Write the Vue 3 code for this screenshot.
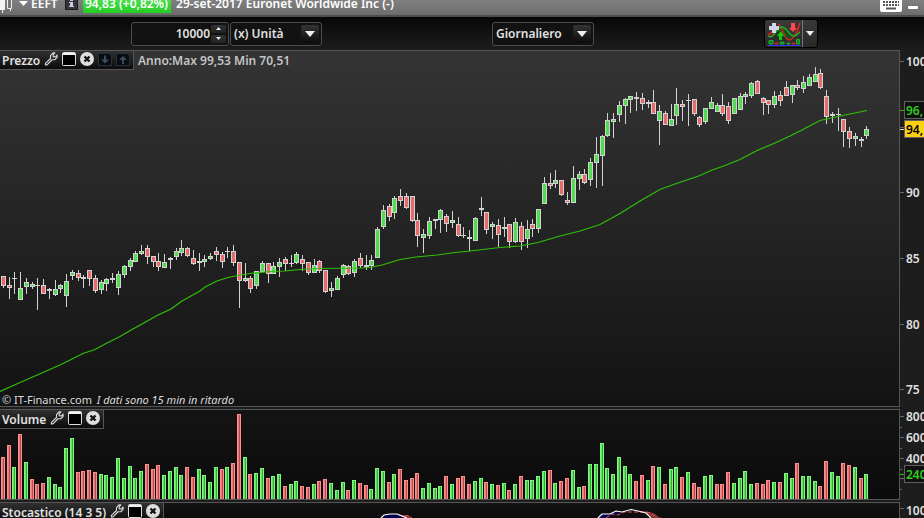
<script setup>
import { ref } from 'vue'

const quantity = ref(10000)
const unit = ref('(x) Unità')
const period = ref('Giornaliero')

// high, body top, body bottom, low, kind (g = up, r = down, d = unchanged)
const candleData = `
276 276 286 288 r|277 285 288 299 r|272 278 279 294 d|272 288 300 300 g|278 282 287 294 g
282 284 287 289 g|278 285 286 310 d|279 285 294 294 r|288 289 291 299 d|280 289 295 296 g
284 285 289 293 g|274 281 296 307 g|270 272 276 280 g|270 273 278 281 r|275 277 279 288 d
270 270 279 286 r|275 278 291 293 r|280 282 290 294 g|278 279 284 291 g|273 278 280 283 d
271 274 288 295 g|265 266 275 278 g|258 260 267 271 g|251 253 262 262 g|245 251 254 255 g
245 248 257 264 r|256 256 262 267 r|253 261 267 271 r|254 262 268 268 g|257 258 260 269 d
248 251 257 260 g|240 248 253 256 g|247 248 256 257 r|250 258 264 265 r|253 261 263 271 d
255 259 262 267 g|253 256 259 260 g|247 251 255 261 r|252 254 262 268 r|247 251 252 258 d
245 251 263 266 r|262 262 281 308 r|263 278 281 282 g|276 278 289 293 r|271 271 286 289 g
261 263 272 272 g|263 263 274 283 r|262 266 274 274 g|258 262 267 277 g|257 259 264 271 r
255 263 264 267 d|252 254 263 264 g|255 259 264 271 r|262 262 273 275 r|259 265 273 273 g
260 261 271 273 r|270 270 292 293 r|282 288 291 297 g|276 278 290 290 g|264 265 275 278 g
265 266 274 275 r|259 261 273 277 g|253 258 266 268 r|255 265 267 270 d|255 260 266 270 g
227 229 258 258 g|205 210 227 229 g|204 206 217 221 r|196 198 213 219 g|189 196 201 206 r
193 196 208 209 r|196 196 221 222 r|213 220 236 247 r|229 234 238 253 g|217 221 236 239 g
219 219 221 229 d|209 210 220 233 g|214 216 224 232 r|211 220 223 228 g|217 224 236 237 r
227 235 236 238 d|230 237 239 251 d|217 218 241 241 g|197 208 210 216 d|212 212 230 234 r
222 224 227 239 g|219 225 235 247 r|217 227 229 237 d|224 224 242 248 r|218 222 242 243 g
222 226 242 250 r|220 229 239 248 g|219 224 229 237 r|209 209 229 233 g|177 183 204 204 g
173 183 186 189 r|170 180 184 188 g|180 180 195 196 r|192 200 203 205 r|166 178 203 203 g
171 174 179 190 g|169 174 183 184 r|158 162 180 186 g|137 154 163 188 g|135 136 156 186 g
113 120 136 137 g|113 119 122 138 g|101 105 115 122 g|98 99 106 124 g|96 96 100 113 g
92 97 99 111 d|93 98 104 110 r|100 102 104 108 d|90 102 114 114 r|105 111 121 145 g
111 113 125 125 r|104 119 126 126 g|88 104 116 125 g|100 104 107 121 r|94 100 101 126 d
99 99 114 116 r|116 117 125 127 r|108 108 122 124 g|97 102 109 109 g|103 105 112 112 g
94 105 114 116 r|102 106 121 124 r|98 98 114 114 g|93 96 110 110 g|92 94 97 104 g
82 83 96 98 g|80 81 94 94 r|97 98 103 115 r|100 100 105 114 r|91 96 105 108 g
91 95 101 106 r|81 87 96 96 r|85 85 95 103 g|80 85 88 90 r|76 82 89 93 g
74 77 86 86 g|67 74 82 82 g|69 73 88 89 r|90 96 117 124 r|112 114 116 123 d
108 114 115 131 d|119 119 132 147 r|127 131 139 148 r|133 136 139 146 g|137 139 141 147 d
126 129 136 139 g`

const volumeData = `
r457 r445 g467 r434 g462 r479 r484 r483 g477 g484 g487 g448 g438 r472 r471 r470 r472 g474 g475 g477
g458 g478 g466 g478 g471 r464 r469 r465 g475 g471 g467 g475 r467 r477 g469 g475 g482 g467 r469 g467
r463 r414 g457 r474 g473 g468 r478 g476 g474 r486 g484 g481 r486 r487 g484 r481 r479 g483 g490 g482
r490 g480 r483 r485 g489 g468 g471 r482 g474 r469 r480 r478 r473 g488 g483 g488 g486 r476 g484 r478
r476 r484 g481 g478 r482 g484 r485 g483 r490 g484 r476 g480 g480 g476 g471 r470 g483 r481 r478 g470
g487 r486 g464 g464 g443 g468 g474 g457 g466 g474 r481 r475 g480 r466 g467 r484 g469 g467 r477 g472
r483 r487 g476 g475 r484 r484 r472 g483 g478 g471 g484 r483 r484 r480 g482 r482 g473 g478 r463 g476
g476 g481 r486 r461 g472 g476 r463 r465 g467 r478 g474`

const sessionX = (i) => 3 + 6 * i - Math.floor(0.62 + 0.2436 * i)

const candles = candleData.trim().split(/[|\n]/).map((row, i) => {
  const [high, top, bottom, low, kind] = row.split(' ')
  return { x: sessionX(i), high: +high, top: +top, bottom: +bottom, low: +low, kind }
})

const volumeBase = 499
const volumes = volumeData.trim().split(/\s+/).map((v, i) => ({
  x: sessionX(i) - 2,
  top: +v.slice(1),
  height: volumeBase - v.slice(1),
  kind: v[0],
}))

const average =
  '0,391.5 20,382.5 43,372.5 62,364 83,353.5 95,349.5 107,343 120,336.5 132,329.5 142,324 158,315 171,309 182,301 200,291 205,287 217,281 228,277.5 240,275 250,273.5 270,271.5 285,271 300,269.5 320,268.5 360,268 370,267.5 382,265 400,259.5 416,257 437,255 455,252.5 470,251 500,247.5 520,246 538,242.5 560,236 580,231 600,224.5 620,213.5 640,201 660,189.5 675,184 700,175.5 711,170.5 725,165.5 740,159.5 757,150.5 775,143 790,136 800,131 820,120.5 838,116.5 867,110.5'

const priceTicks = [
  { y: 61, label: '100' },
  { y: 127, label: '' },
  { y: 192, label: '90' },
  { y: 258, label: '85' },
  { y: 324, label: '80' },
  { y: 389, label: '75' },
]
const volumeTicks = [
  { y: 416, label: '800' },
  { y: 437, label: '600' },
  { y: 458, label: '400' },
]
</script>

<template>
  <div class="app">
    <svg class="defs" width="0" height="0" aria-hidden="true">
      <symbol id="wrench" viewBox="0 0 15 15">
        <path d="M1.5 12.2 7 7V3.8L9.6 1h2L9.8 3.2v2h2.4L14 3.4v2.4L11.5 8.3H8.6L3.2 13.8H1.5z" fill="#191919" stroke="#d6d6d6" stroke-width="1.3" stroke-linejoin="round" />
      </symbol>
      <symbol id="window" viewBox="0 0 14 14">
        <rect x=".5" y=".5" width="13" height="13" rx="1" fill="#000" stroke="#dcdcdc" />
        <path d="M1 1h12v2H1z" fill="#f2f2f2" />
      </symbol>
      <symbol id="close" viewBox="0 0 14 14">
        <circle cx="7" cy="7" r="7" fill="#dedede" />
        <path d="m4.500 4.500 5 5m0-5-5 5" stroke="#151515" stroke-width="2.400" />
      </symbol>
      <symbol id="sheet-down" viewBox="0 0 14 14">
        <path d="M.5 1.500H11l2.500 2.500v9.500H.5z" fill="#080c10" stroke="#26313c" />
        <path d="M6 3.500h2v4h3l-4 4-4-4h3z" fill="#3b4d5c" />
      </symbol>
      <symbol id="sheet-up" viewBox="0 0 14 14">
        <path d="M.5 1.500H11l2.500 2.500v9.500H.5z" fill="#080c10" stroke="#26313c" />
        <path d="M6 12h2V8h3L7 4 3 8h3z" fill="#3b4d5c" />
      </symbol>
    </svg>

    <header class="titlebar">
      <svg class="candle-icon" width="14" height="22" viewBox="0 0 14 22" aria-hidden="true">
        <path d="M2.500 4v16M10.500 4v14" stroke="#eee" />
        <path d="M-1 6h6v11h-6z" fill="#f4f4f4" />
        <path d="M7.500 5.500h4v10h-4z" fill="#777" stroke="#eee" />
      </svg>
      <svg class="caret" width="9" height="5" viewBox="0 0 9 5" aria-hidden="true"><path d="M0 0h9L4.500 5z" fill="#fff" /></svg>
      <span class="symbol">EEFT</span>
      <button class="info" aria-label="Info">
        <svg width="13" height="13" viewBox="0 0 13 13" aria-hidden="true">
          <rect x=".5" y=".5" width="12" height="12" fill="#34343c" stroke="#1c1c20" />
          <path d="M5 2h3v2H5zM4 5h4v4h1v1H4V9h1V6H4z" fill="#ccd" />
        </svg>
      </button>
      <strong class="quote">94,83 (+0,82%)</strong>
      <h1>29-set-2017 Euronet Worldwide Inc (-)</h1>
      <button class="keyboard" aria-label="Tastiera">
        <svg width="22" height="16" viewBox="0 0 22 16" aria-hidden="true">
          <rect width="22" height="16" rx="2" fill="#fff" />
          <path d="M3 3h16M3 6h16M3 9h16" stroke="#555" stroke-width="2" stroke-dasharray="2 1" />
          <path d="M6 12.500h10" stroke="#555" stroke-width="2" />
        </svg>
      </button>
      <button class="minimize" aria-label="Riduci"><i></i></button>
    </header>

    <div class="toolbar">
      <div class="field quantity">
        <input v-model="quantity" type="text" inputmode="numeric" aria-label="Quantità" />
        <div class="spinner">
          <button aria-label="Aumenta" @click="quantity++">
            <svg width="5" height="3" viewBox="0 0 5 3"><path d="M0 3h5L2.500 0z" fill="#eee" /></svg>
          </button>
          <button aria-label="Diminuisci" @click="quantity--">
            <svg width="5" height="3" viewBox="0 0 5 3"><path d="M0 0h5L2.500 3z" fill="#eee" /></svg>
          </button>
        </div>
      </div>
      <div class="field unit">
        <select v-model="unit" aria-label="Unità"><option>(x) Unità</option></select>
        <span class="drop"><svg width="10" height="6" viewBox="0 0 10 6"><path d="M0 0h10L5 6z" fill="#f0f0f0" /></svg></span>
      </div>
      <div class="field period">
        <select v-model="period" aria-label="Periodo"><option>Giornaliero</option></select>
        <span class="drop"><svg width="10" height="6" viewBox="0 0 10 6"><path d="M0 0h10L5 6z" fill="#f0f0f0" /></svg></span>
      </div>
      <div class="indicators">
        <button class="add" aria-label="Aggiungi indicatore">
          <svg width="34" height="24" viewBox="0 0 34 24" aria-hidden="true">
            <path d="M1 14c5 1 9-9 15-8 4 1 6 8 11 8l-5 4c-4-1-5-8-8-9-4 0-8 7-13 5z" fill="#155015" />
            <path d="M1 12l5-3v5H1zM28 11c2-2 4-5 5-9v10l-3-1-5 4z" fill="#7c2020" />
            <path d="M1 13l5-4M11 2c5 1 5 15 11 16 6-1 8-10 11-17" fill="none" stroke="#d02626" stroke-width="1.500" />
            <path d="M1 14c6 4 8-9 14-9 6 1 7 9 12 9 3 0 4-3 6-4" fill="none" stroke="#1fae2d" stroke-width="1.500" />
            <path d="M5 1h4v3h3v4H9v3H5V8H2V4h3z" fill="#d2d6e8" />
            <path d="M24 1h4v5h2l-4 4-4-4h2z" fill="#ff4a4a" />
            <path d="M12 18v-4h-2l4-5 3 5h-2v4z" fill="#08d008" />
            <path d="M2 18.500h4V22H2zM13 20h4v2h-4zM20 21h3v1h-3zM29.500 17.500h3V22h-3z" fill="#148018" stroke="#1fae2d" />
            <path d="M8 21h3v1H8zM25 21h3v1h-3z" fill="#801414" stroke="#d02626" />
            <path d="M1 23.500h33" stroke="#3030ff" />
          </svg>
        </button>
        <button class="more" aria-label="Altri indicatori">
          <svg width="8" height="5" viewBox="0 0 8 5"><path d="M0 0h8L4 5z" fill="#eee" /></svg>
        </button>
      </div>
    </div>

    <main class="charts">
      <section class="row price">
        <div class="plot">
          <svg class="drawing" viewBox="0 51 899 355" preserveAspectRatio="none" role="img" aria-label="Prezzo">
            <g v-for="c in candles" :key="c.x" shape-rendering="crispEdges">
              <rect class="wick" :x="c.x" :y="c.high" width="1" :height="c.low - c.high" />
              <rect class="wick" :x="c.x - 2" :y="c.top" width="5" :height="c.bottom - c.top" />
              <rect v-if="c.kind !== 'd'" :class="['body', c.kind]" :x="c.x - 1" :y="c.top + 1" width="3" :height="c.bottom - c.top - 2" />
            </g>
            <polyline class="average" :points="average" />
          </svg>
          <div class="tag">
            <h2>Prezzo</h2>
            <button aria-label="Impostazioni"><svg><use href="#wrench" /></svg></button>
            <button aria-label="Ingrandisci"><svg><use href="#window" /></svg></button>
            <button aria-label="Chiudi"><svg><use href="#close" /></svg></button>
            <button aria-label="Sposta giù"><svg><use href="#sheet-down" /></svg></button>
            <button aria-label="Sposta su"><svg><use href="#sheet-up" /></svg></button>
          </div>
          <p class="range">Anno:Max 99,53 Min 70,51</p>
          <p class="credit">© IT-Finance.com <em>I dati sono 15 min in ritardo</em></p>
        </div>
        <svg class="axis" viewBox="900 50 24 357" preserveAspectRatio="xMinYMin slice">
          <g v-for="t in priceTicks" :key="t.y">
            <rect class="tick" x="900" :y="t.y" width="4" height="1" />
            <text x="906" :y="t.y + 5">{{ t.label }}</text>
          </g>
          <rect class="tick-green" x="900" y="110" width="4" height="1" />
          <rect class="badge dark" x="904.5" y="101.5" width="60" height="17" />
          <text class="green" x="906" y="115">96,</text>
          <rect class="tick-white" x="900" y="129" width="4" height="1" />
          <rect class="badge yellow" x="904.5" y="120.5" width="60" height="17" />
          <text class="black" x="906" y="134">94,</text>
        </svg>
      </section>

      <section class="row volume">
        <div class="plot">
          <svg class="drawing" viewBox="0 410 899 89" preserveAspectRatio="none" role="img" aria-label="Volume">
            <g v-for="v in volumes" :key="v.x" :class="v.kind" shape-rendering="crispEdges">
              <rect class="edge" :x="v.x" :y="v.top" width="4" :height="v.height" />
              <rect class="fill" :x="v.x + 1" :y="v.top + 1" width="1" :height="v.height" />
              <rect class="shade" :x="v.x + 2" :y="v.top + 1" width="1" :height="v.height" />
            </g>
          </svg>
          <div class="tag">
            <h2>Volume</h2>
            <button aria-label="Impostazioni"><svg><use href="#wrench" /></svg></button>
            <button aria-label="Ingrandisci"><svg><use href="#window" /></svg></button>
            <button aria-label="Chiudi"><svg><use href="#close" /></svg></button>
          </div>
        </div>
        <svg class="axis" viewBox="900 409 24 91" preserveAspectRatio="xMinYMin slice">
          <g v-for="t in volumeTicks" :key="t.y">
            <rect class="tick" x="900" :y="t.y" width="4" height="1" />
            <rect class="tick" x="900" :y="t.y + 11" width="2" height="1" />
            <text x="906" :y="t.y + 5">{{ t.label }}</text>
          </g>
          <rect class="tick" x="900" y="478" width="4" height="1" />
          <rect class="tick" x="900" y="489" width="2" height="1" />
          <rect class="tick-green" x="900" y="474" width="4" height="1" />
          <rect class="badge dark" x="904.5" y="465.5" width="60" height="17" />
          <text class="green" x="906" y="479">240</text>
        </svg>
      </section>

      <section class="row stochastic">
        <div class="plot">
          <svg class="drawing" viewBox="0 503 899 15" preserveAspectRatio="none" role="img" aria-label="Stocastico">
            <path d="M381 518l3-3 6-1h7l5 2 3 2zM598 518l4-4h8l6-3 6 1 6-1-14 4-10 3z" fill="#04044c" />
            <path d="M400 515l8 0 4 3h-7zM640 511l10 1 5 2 4 3 3 1h-10l-6-5z" fill="#803838" />
            <path d="M399 515l4 1 4-.5 3 1 2 1.500M606 518l6-4 6 1 6-3h14l8 0 5 1 4 3" fill="none" stroke="#e05050" stroke-dasharray="4 2" />
            <path d="M381 518l3-3 6-1h7l5 2 5 2M598 518l4-4h8l6-3 6 1 9-2.500 7 1.500 8 2 5 5" fill="none" stroke="#fff" stroke-width="1.200" />
          </svg>
          <div class="tag">
            <h2>Stocastico (14 3 5)</h2>
            <button aria-label="Impostazioni"><svg><use href="#wrench" /></svg></button>
            <button aria-label="Ingrandisci"><svg><use href="#window" /></svg></button>
            <button aria-label="Chiudi"><svg><use href="#close" /></svg></button>
          </div>
        </div>
        <svg class="axis" viewBox="900 502 24 16" preserveAspectRatio="xMinYMin slice">
          <rect class="tick" x="900" y="508" width="4" height="1" />
          <text x="906" y="515">100</text>
        </svg>
      </section>
    </main>
  </div>
</template>

<style>
body {
  margin: 0;
  overflow: hidden;
  background: #1d1d1d;
}
</style>

<style scoped>
.app {
  display: flex;
  flex-direction: column;
  height: 100vh;
  overflow: hidden;
  background: #1d1d1d;
  color: #e0e0e0;
  font: 600 12px/16px "Noto Sans", sans-serif;
  white-space: nowrap;
}
.app * {
  box-sizing: border-box;
}
.defs {
  position: absolute;
}
button {
  display: flex;
  align-items: center;
  justify-content: center;
  padding: 0;
  border: 0;
  background: none;
  color: inherit;
}
h1,
h2,
p {
  margin: 0;
  font: inherit;
}
.titlebar {
  display: flex;
  flex: none;
  align-items: center;
  height: 26px;
  margin-top: -9px;
  padding-top: 1px;
  border-bottom: 2px solid #4c4c4c;
  background: linear-gradient(#8c8c8c, #6c6c6c);
  color: #fff;
}
.candle-icon {
  width: 14px;
  margin-right: 5px;
}
.caret {
  margin-right: 3px;
}
.symbol {
  width: 34px;
}
.info {
  margin-right: 5px;
}
.quote {
  padding: 1px 3px 1px 2px;
  margin-right: 5px;
  background: linear-gradient(#5be35b, #22cc22);
  font-weight: 600;
}
.keyboard {
  margin-left: auto;
}
.minimize {
  align-self: flex-end;
  width: 22px;
  height: 16px;
}
.minimize i {
  width: 10px;
  height: 3px;
  border-radius: 1px;
  background: #fff;
}
.toolbar {
  display: flex;
  flex: none;
  align-items: center;
  height: 33px;
  padding-left: 131px;
  background: linear-gradient(#070707, #1d1d1d);
}
.field {
  display: flex;
  align-items: center;
  height: 24px;
  border: 1px solid #4c4c4c;
  border-radius: 3px;
  background: #121212;
}
.field input,
.field select {
  flex: 1;
  min-width: 0;
  height: 20px;
  padding: 0;
  border: 0;
  outline: 0;
  appearance: none;
  background: none;
  color: #e0e0e0;
  font: inherit;
}
.field input {
  text-align: right;
}
.quantity {
  width: 98px;
  padding-right: 2px;
}
.spinner {
  display: grid;
  gap: 2px;
  width: 15px;
  margin-left: 1px;
}
.spinner button {
  height: 8px;
  border-radius: 2px;
  background: linear-gradient(#333, #222);
}
.unit {
  position: relative;
  width: 92px;
  margin-left: 1px;
}
.period {
  position: relative;
  width: 102px;
  margin-left: 170px;
}
.unit select,
.period select {
  padding-left: 3px;
}
.drop {
  position: absolute;
  right: 2px;
  display: flex;
  align-items: center;
  justify-content: center;
  width: 18px;
  height: 18px;
  border-radius: 2px;
  background: linear-gradient(#343434, #0c0c0c);
  pointer-events: none;
}
.indicators {
  display: flex;
  height: 29px;
  margin-left: 170px;
  border: 1px solid #000;
  border-radius: 3px;
  background: linear-gradient(#3a3a3a, #282828);
}
.add {
  width: 37px;
}
.more {
  width: 15px;
  border-left: 1px solid #777;
}
.charts {
  display: flex;
  flex: 1;
  flex-direction: column;
  gap: 2px;
  min-height: 0;
}
.row {
  display: grid;
  flex: none;
  grid-template-columns: 1fr 24px;
}
.plot {
  position: relative;
  border: solid #555;
  border-width: 1px 1px 1px 0;
}
.drawing {
  display: block;
  width: 100%;
  height: 100%;
}
.price {
  height: 357px;
}
.volume {
  height: 91px;
}
.stochastic {
  height: 16px;
}
.stochastic .plot {
  border-bottom: 0;
}
.price .plot {
  background: linear-gradient(#343434, #131313);
}
.volume .plot,
.stochastic .plot {
  background: linear-gradient(#141414, #0b0b0b);
}
.axis {
  width: 24px;
  height: 100%;
  overflow: visible;
  fill: #e0e0e0;
}
.tag {
  position: absolute;
  top: 0;
  left: 0;
  display: flex;
  align-items: center;
  gap: 4px;
  height: 19px;
  padding: 0 3px 2px 2px;
  border: solid #555;
  border-width: 0 1px 1px 0;
  background: linear-gradient(#303030, #0c0c0c);
}
.tag h2 {
  padding-top: 3px;
}
.tag svg {
  display: block;
  width: 14px;
  height: 14px;
}
.range {
  position: absolute;
  top: 2px;
  left: 138px;
  color: #c4c4c4;
}
.credit {
  position: absolute;
  bottom: -2px;
  left: 2px;
  color: #dcdcdc;
  font-size: 11px;
  font-weight: 400;
}
.credit em {
  margin-left: 2px;
}
.wick {
  fill: #d2d2d2;
}
.body.g {
  fill: #4fdc4f;
}
.body.r {
  fill: #ea6a6a;
}
.average {
  fill: none;
  stroke: #2fc008;
  stroke-width: 1.2;
}
.g .edge {
  fill: #80f880;
}
.g .fill {
  fill: #62e462;
}
.g .shade {
  fill: #36a836;
}
.r .edge {
  fill: #fc9090;
}
.r .fill {
  fill: #f07878;
}
.r .shade {
  fill: #b84c4c;
}
.tick {
  fill: #666;
}
.tick-green {
  fill: #2fb80a;
}
.tick-white {
  fill: #e0e0e0;
}
.badge {
  stroke: #606060;
}
.dark {
  fill: #101010;
}
.yellow {
  fill: #ffd012;
}
.green {
  fill: #32cd20;
}
.black {
  fill: #000;
}
</style>
